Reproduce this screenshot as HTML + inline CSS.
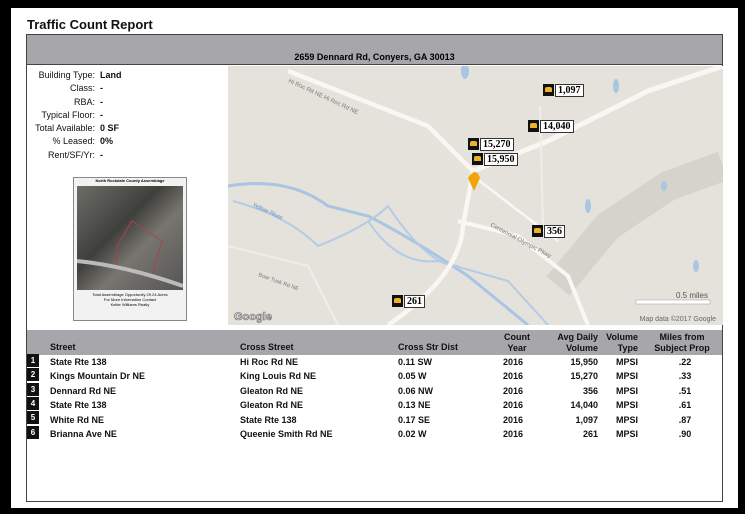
<!DOCTYPE html>
<html><head><meta charset="utf-8"><style>
body{margin:0;width:745px;height:514px;background:#000;position:relative;overflow:hidden;font-family:"Liberation Sans",Arial,sans-serif;}
.page{position:absolute;left:11px;top:8px;width:727px;height:500px;background:#fff;}
.abs{position:absolute;}
.title{left:27px;top:17px;font-size:13px;font-weight:bold;color:#111;}
.box{left:26px;top:34px;width:697px;height:468px;border:1px solid #444;box-sizing:border-box;}
.hdr{left:27px;top:35px;width:695px;height:29px;background:#a7a6ab;border-bottom:1px solid #444;font-size:9px;font-weight:bold;text-align:center;line-height:14px;}
.info{font-size:9px;line-height:13.3px;color:#111;}
.th{left:27px;top:330px;width:695px;height:25px;background:#a7a6ab;}
.t{font-size:9px;font-weight:bold;color:#111;}
.n{position:absolute;left:27px;width:12px;height:13px;background:#111;color:#fff;font-size:8px;font-weight:bold;text-align:center;line-height:13px;}
.tag{position:absolute;font-family:"Liberation Serif",serif;font-weight:bold;font-size:10px;background:#fff;border:1px solid #333;padding:0 2px;line-height:11px;}
.car{position:absolute;width:11px;height:12px;background:#111;}
.car:after{content:"";position:absolute;left:2px;top:3px;width:7px;height:5px;background:#e8b325;border-radius:2px 2px 0 0;}
</style></head><body>
<div class="page"></div>
<div class="abs title">Traffic Count Report</div>
<div class="abs box"></div>
<div class="abs hdr"><div style="margin-top:17px;line-height:10px">2659 Dennard Rd, Conyers, GA 30013</div></div>
<div class="abs info" style="left:0;top:69px;width:200px">
<div style="position:relative;height:13.3px"><span style="position:absolute;right:105px">Building Type:</span><b style="position:absolute;left:100px">Land</b></div>
<div style="position:relative;height:13.3px"><span style="position:absolute;right:105px">Class:</span><b style="position:absolute;left:100px">-</b></div>
<div style="position:relative;height:13.3px"><span style="position:absolute;right:105px">RBA:</span><b style="position:absolute;left:100px">-</b></div>
<div style="position:relative;height:13.3px"><span style="position:absolute;right:105px">Typical Floor:</span><b style="position:absolute;left:100px">-</b></div>
<div style="position:relative;height:13.3px"><span style="position:absolute;right:105px">Total Available:</span><b style="position:absolute;left:100px">0 SF</b></div>
<div style="position:relative;height:13.3px"><span style="position:absolute;right:105px">% Leased:</span><b style="position:absolute;left:100px">0%</b></div>
<div style="position:relative;height:13.3px"><span style="position:absolute;right:105px">Rent/SF/Yr:</span><b style="position:absolute;left:100px">-</b></div>
</div>
<div class="abs" style="left:73px;top:177px;width:112px;height:142px;background:#f2f2f2;border:1px solid #888;">
<div style="height:8px;font-size:4px;text-align:center;font-weight:bold">North Rockdale County Assemblage</div>
<div style="margin:0 3px;height:104px;background:linear-gradient(135deg,#6d6d68,#3f3f3c 40%,#77756f 60%,#555 100%);position:relative">
<svg width="106" height="104" style="position:absolute;left:0;top:0"><polygon points="55,35 85,55 75,90 40,80 40,60" fill="none" stroke="#a44" stroke-width="1"/><path d="M0,75 Q50,80 106,100" stroke="#bbb" stroke-width="4" fill="none"/></svg></div>
<div style="font-size:4px;text-align:center;line-height:5px;margin-top:2px">Total Assemblage Opportunity 29.24 Acres<br>For More Information Contact<br>Keller Williams Realty</div>
</div>
<svg class="abs" style="left:228px;top:66px" width="495" height="259" viewBox="0 0 495 259">
<rect width="495" height="259" fill="#e5e2db"/>
<path d="M330,220 L380,160 L440,120 L495,100" fill="none" stroke="#d6d3cd" stroke-width="30"/>
<path d="M0,120 Q60,110 100,140 L140,150 Q180,170 240,210 L300,259" fill="none" stroke="#a9c5e4" stroke-width="3"/>
<path d="M5,135 Q60,150 90,180 Q140,160 160,140 Q200,200 230,200" fill="none" stroke="#b3cbe4" stroke-width="2"/>
<path d="M140,155 Q170,200 210,195 L280,215 L320,259" fill="none" stroke="#b3cbe4" stroke-width="2"/>
<path d="M495,0 L420,25 L320,75 L245,105" fill="none" stroke="#f8f7f4" stroke-width="5"/>
<path d="M60,5 L200,60 L245,105 L235,160 Q232,210 160,259" fill="none" stroke="#f8f7f4" stroke-width="4.5"/>
<path d="M245,110 L330,175" stroke="#f8f7f4" stroke-width="2.5"/>
<path d="M230,155 L290,170 L340,210 L360,259" fill="none" stroke="#f8f7f4" stroke-width="4"/>
<path d="M312,40 L315,160" stroke="#f0eeea" stroke-width="2"/>
<path d="M0,180 L80,200 L110,259" fill="none" stroke="#f0eeea" stroke-width="2"/>
<ellipse cx="237" cy="5" rx="4" ry="8" fill="#a9c5e4"/>
<ellipse cx="360" cy="140" rx="3" ry="7" fill="#a9c5e4"/><ellipse cx="388" cy="20" rx="3" ry="7" fill="#a9c5e4"/><ellipse cx="436" cy="120" rx="3" ry="5" fill="#a9c5e4"/><ellipse cx="468" cy="200" rx="3" ry="6" fill="#a9c5e4"/>
<text x="60" y="16" font-size="6" fill="#777" transform="rotate(25 60 16)" font-family="Liberation Sans">Hi Roc Rd NE  Hi Roc Rd NE</text>
<text x="24" y="140" font-size="6" fill="#5b8fc6" transform="rotate(25 24 140)" font-family="Liberation Sans">Yellow River</text>
<text x="262" y="160" font-size="6" fill="#777" transform="rotate(28 262 160)" font-family="Liberation Sans">Centennial Olympic Pkwy</text>
<text x="30" y="210" font-size="5.5" fill="#777" transform="rotate(20 30 210)" font-family="Liberation Sans">Boar Tusk Rd NE</text>
<path d="M240,112 Q248,100 252,112 L246,125 Z" fill="#f0a30a"/>
<text x="6" y="254" font-size="11" font-weight="bold" fill="#ddd" stroke="#666" stroke-width=".6" font-family="Liberation Sans">Google</text>
<text x="488" y="255" font-size="7" fill="#666" text-anchor="end" font-family="Liberation Sans">Map data ©2017 Google</text>
<text x="480" y="232" font-size="8" fill="#555" text-anchor="end" font-family="Liberation Sans">0.5 miles</text>
<path d="M408,234 L482,234 L482,238 L408,238Z" fill="#fff" stroke="#999" stroke-width=".5"/>
</svg>
<div class="car" style="left:543px;top:84px"></div><div class="tag" style="left:555px;top:84px">1,097</div>
<div class="car" style="left:528px;top:120px"></div><div class="tag" style="left:540px;top:120px">14,040</div>
<div class="car" style="left:468px;top:138px"></div><div class="tag" style="left:480px;top:138px">15,270</div>
<div class="car" style="left:472px;top:153px"></div><div class="tag" style="left:484px;top:153px">15,950</div>
<div class="car" style="left:532px;top:225px"></div><div class="tag" style="left:544px;top:225px">356</div>
<div class="car" style="left:392px;top:295px"></div><div class="tag" style="left:404px;top:295px">261</div>
<div class="abs th"></div>
<div class="abs t" style="left:50px;top:342px">Street</div>
<div class="abs t" style="left:240px;top:342px">Cross Street</div>
<div class="abs t" style="left:398px;top:342px">Cross Str Dist</div>
<div class="abs t" style="left:500px;top:332px;line-height:11px;width:34px;text-align:center">Count<br>Year</div>
<div class="abs t" style="left:540px;top:332px;line-height:11px;width:58px;text-align:right">Avg Daily<br>Volume</div>
<div class="abs t" style="left:600px;top:332px;line-height:11px;width:38px;text-align:right">Volume<br>Type</div>
<div class="abs t" style="left:646px;top:332px;line-height:11px;width:72px;text-align:center">Miles from<br>Subject Prop</div>
<div class="n" style="top:354px">1</div><div class="n" style="top:368px">2</div><div class="n" style="top:383px">3</div><div class="n" style="top:397px">4</div><div class="n" style="top:411px">5</div><div class="n" style="top:426px">6</div>
<div class="abs t" style="left:50px;top:355px;line-height:14.4px">State Rte 138<br>Kings Mountain Dr NE<br>Dennard Rd NE<br>State Rte 138<br>White Rd NE<br>Brianna Ave NE</div>
<div class="abs t" style="left:240px;top:355px;line-height:14.4px">Hi Roc Rd NE<br>King Louis Rd NE<br>Gleaton Rd NE<br>Gleaton Rd NE<br>State Rte 138<br>Queenie Smith Rd NE</div>
<div class="abs t" style="left:398px;top:355px;line-height:14.4px">0.11 SW<br>0.05 W<br>0.06 NW<br>0.13 NE<br>0.17 SE<br>0.02 W</div>
<div class="abs t" style="left:503px;top:355px;line-height:14.4px">2016<br>2016<br>2016<br>2016<br>2016<br>2016</div>
<div class="abs t" style="left:540px;top:355px;line-height:14.4px;width:58px;text-align:right">15,950<br>15,270<br>356<br>14,040<br>1,097<br>261</div>
<div class="abs t" style="left:600px;top:355px;line-height:14.4px;width:38px;text-align:right">MPSI<br>MPSI<br>MPSI<br>MPSI<br>MPSI<br>MPSI</div>
<div class="abs t" style="left:670px;top:355px;line-height:14.4px;width:30px;text-align:center">.22<br>.33<br>.51<br>.61<br>.87<br>.90</div>
</body></html>
